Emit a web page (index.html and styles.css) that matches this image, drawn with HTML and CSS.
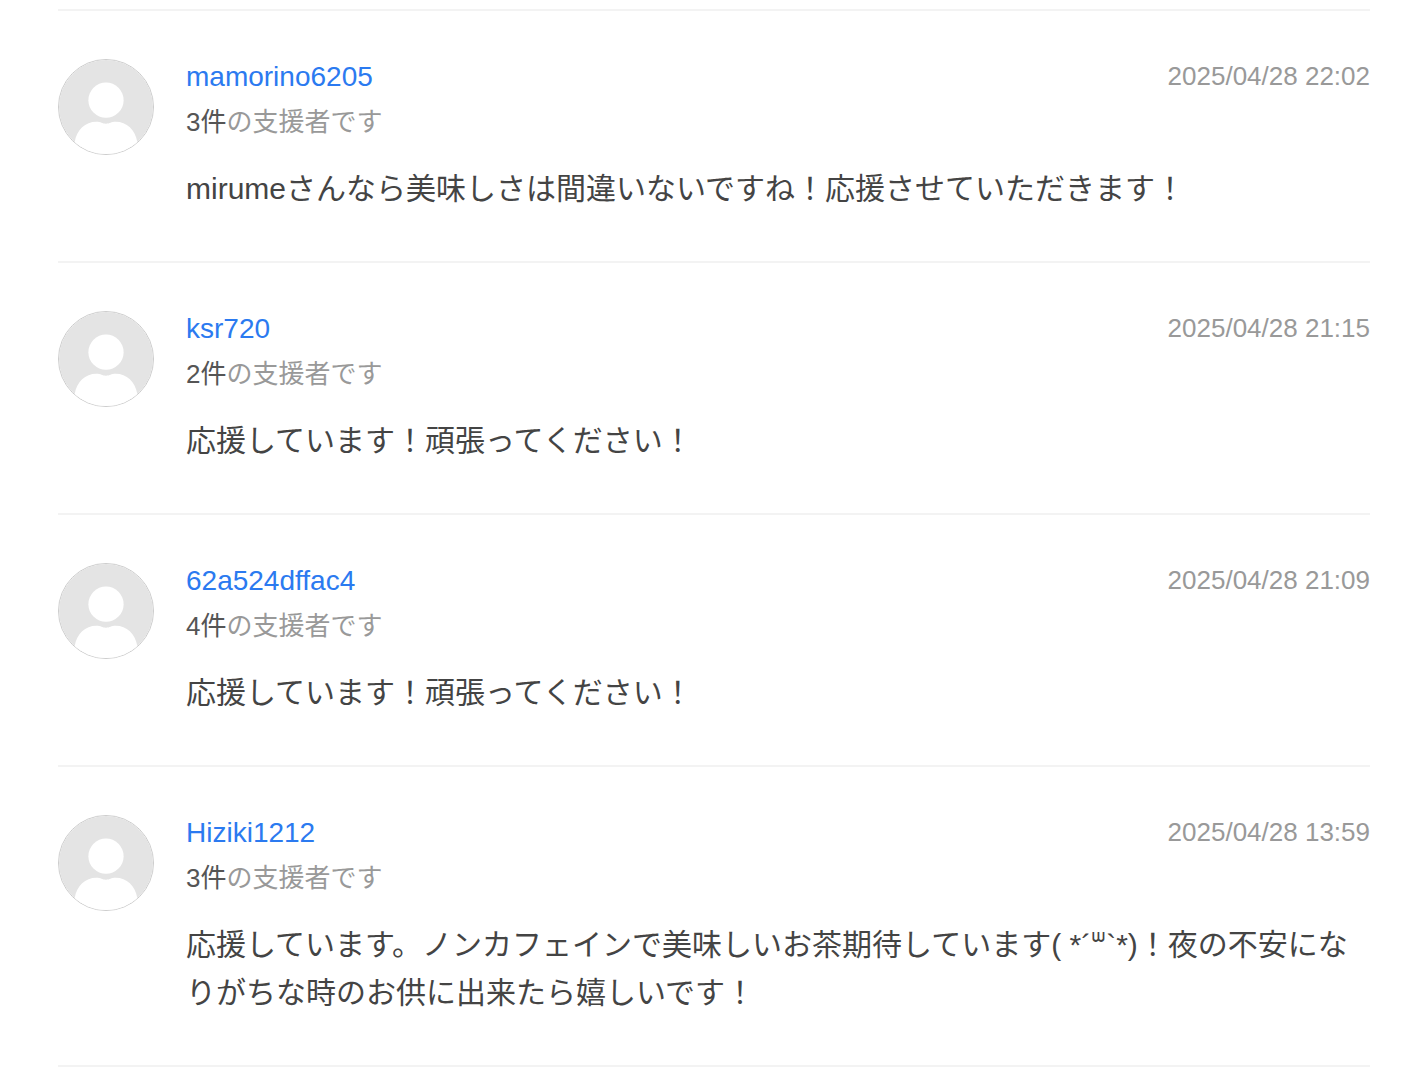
FILE: index.html
```html
<!DOCTYPE html>
<html lang="ja">
<head>
  <meta charset="UTF-8" />
  <meta name="viewport" content="width=device-width, initial-scale=1.0"/>
  <title>応援コメント</title>
  <link rel="stylesheet" href="styles.css">
</head>
<body>

  <svg class="sprite" aria-hidden="true">
    <symbol id="user" viewBox="0 0 96 96">
      <circle cx="48" cy="48" r="48" fill="#e4e4e4"/>
      <circle cx="48" cy="41" r="18" fill="#fff"/>
      <path d="M16 96V84C18 71 27 63 38 63C43 63 44 65 48 65C52 65 53 63 58 63C69 63 78 71 80 84V96Z" fill="#fff"/>
    </symbol>
  </svg>

  <ul class="comments">
    <li class="comment">
      <svg class="avatar" aria-hidden="true"><use href="#user"/></svg>
      <div class="comment-body">
        <div class="comment-head">
          <a class="name" href="#">mamorino6205</a>
          <time class="date" datetime="2025-04-28T22:02">2025/04/28 22:02</time>
        </div>
        <p class="support"><span class="count">3件</span>の支援者です</p>
        <p class="text">mirumeさんなら美味しさは間違いないですね！応援させていただきます！</p>
      </div>
    </li>
    <li class="comment">
      <svg class="avatar" aria-hidden="true"><use href="#user"/></svg>
      <div class="comment-body">
        <div class="comment-head">
          <a class="name" href="#">ksr720</a>
          <time class="date" datetime="2025-04-28T21:15">2025/04/28 21:15</time>
        </div>
        <p class="support"><span class="count">2件</span>の支援者です</p>
        <p class="text">応援しています！頑張ってください！</p>
      </div>
    </li>
    <li class="comment">
      <svg class="avatar" aria-hidden="true"><use href="#user"/></svg>
      <div class="comment-body">
        <div class="comment-head">
          <a class="name" href="#">62a524dffac4</a>
          <time class="date" datetime="2025-04-28T21:09">2025/04/28 21:09</time>
        </div>
        <p class="support"><span class="count">4件</span>の支援者です</p>
        <p class="text">応援しています！頑張ってください！</p>
      </div>
    </li>
    <li class="comment">
      <svg class="avatar" aria-hidden="true"><use href="#user"/></svg>
      <div class="comment-body">
        <div class="comment-head">
          <a class="name" href="#">Hiziki1212</a>
          <time class="date" datetime="2025-04-28T13:59">2025/04/28 13:59</time>
        </div>
        <p class="support"><span class="count">3件</span>の支援者です</p>
        <p class="text">応援しています。ノンカフェインで美味しいお茶期待しています( *´ᐜ`*)！夜の不安になりがちな時のお供に出来たら嬉しいです！</p>
      </div>
    </li>
  </ul>

</body>
</html>
```

FILE: styles.css
```css
* { box-sizing: border-box; margin: 0; padding: 0; }

body {
  background-color: #fff;
  color: #444;
  font-family: "Liberation Sans", "Noto Sans CJK JP", "DejaVu Sans", sans-serif;
}

.sprite {
  display: block;
  width: 0;
  height: 0;
}

.comments {
  list-style: none;
  margin: 9px 44px 9px 58px;
  border-top: 2px solid #f3f3f3;
}

.comment {
  display: flex;
  gap: 32px;
  padding: 48px 0;
  border-bottom: 2px solid #f3f3f3;
}

.avatar {
  flex: none;
  width: 96px;
  height: 96px;
  border: 1px solid #ccc;
  border-radius: 50%;
  overflow: hidden;
}

.comment-body {
  flex: 1;
  min-width: 0;
}

.comment-head {
  display: flex;
  justify-content: space-between;
  line-height: 36px;
}

.name {
  font-size: 28px;
  color: #2b7af0;
  text-decoration: none;
}

.name:hover { text-decoration: underline; }

.date {
  font-size: 26px;
  line-height: 34px;
  color: #999;
}

.support {
  margin: 4px 0 20px;
  font-size: 26px;
  line-height: 46px;
  color: #999;
}

.count { color: #555; }

.text {
  font-size: 30px;
  line-height: 48px;
}
```
